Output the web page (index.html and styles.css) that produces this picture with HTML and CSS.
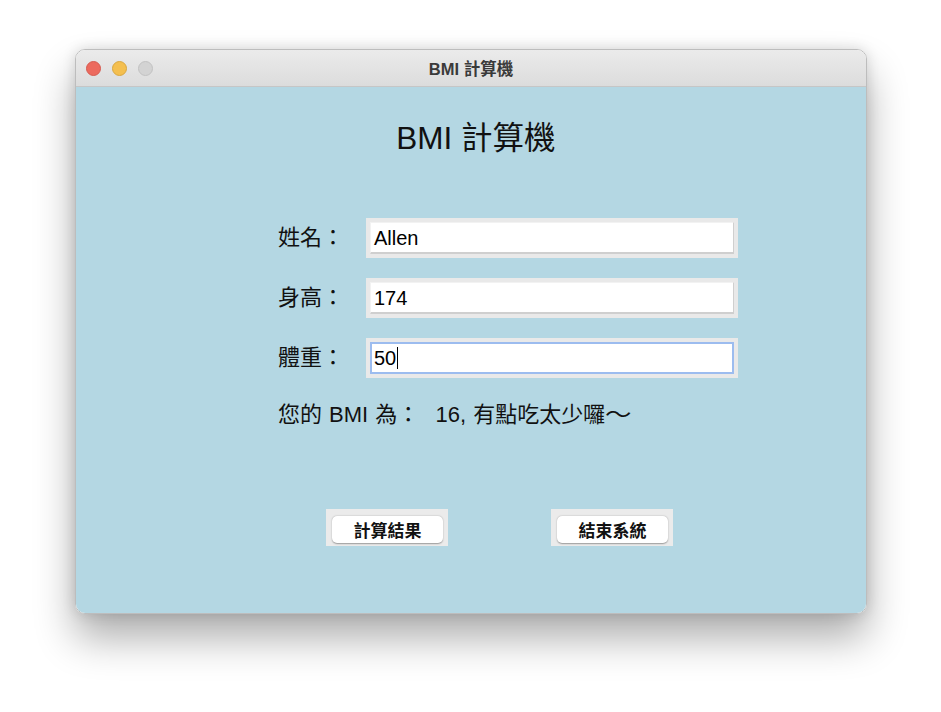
FILE: index.html
```html
<!DOCTYPE html>
<html lang="zh-Hant">
<head>
<meta charset="utf-8">
<title>BMI 計算機</title>
<link rel="stylesheet" href="styles.css">
</head>
<body>
<div class="window">
  <div class="titlebar">
    <div class="lights">
      <span class="light red"></span>
      <span class="light yellow"></span>
      <span class="light gray"></span>
    </div>
    <div class="title">BMI 計算機</div>
  </div>
  <div class="content">
    <h1 class="heading">BMI 計算機</h1>
    <div class="form">
      <div class="label">姓名：</div>
      <div class="entry"><div class="field">Allen</div></div>
      <div class="label">身高：</div>
      <div class="entry"><div class="field">174</div></div>
      <div class="label">體重：</div>
      <div class="entry"><div class="field focused">50<span class="caret"></span></div></div>
    </div>
    <div class="result">您的 BMI 為<span class="colon">：</span> 16, 有點吃太少囉<span class="tilde">～</span></div>
    <div class="buttons">
      <div class="btn-wrap"><div class="btn">計算結果</div></div>
      <div class="btn-wrap"><div class="btn">結束系統</div></div>
    </div>
  </div>
</div>
</body>
</html>
```
FILE: styles.css
```css
html, body {
  margin: 0;
  padding: 0;
  background: #ffffff;
}
body {
  min-height: 712px;
  box-sizing: border-box;
  padding: 49px 0 0 75px;
  font-family: "Liberation Sans", "Noto Sans CJK TC", sans-serif;
  color: #111;
}
.window {
  width: 792px;
  height: 565px;
  border-radius: 10px;
  overflow: hidden;
  box-sizing: border-box;
  border: 1px solid #bdbdbd;
  box-shadow: 0 24px 40px rgba(0,0,0,0.32), 0 0 14px rgba(0,0,0,0.14);
  display: flex;
  flex-direction: column;
}
.titlebar {
  height: 36px;
  flex: none;
  background: linear-gradient(#ebebeb, #dcdcdc);
  border-bottom: 1px solid #c6c6c6;
  display: flex;
  align-items: center;
  position: relative;
}
.lights {
  display: flex;
  gap: 11px;
  padding-left: 10px;
}
.light {
  width: 15px;
  height: 15px;
  border-radius: 50%;
  box-sizing: border-box;
}
.red { background: #ec6a5e; border: 1px solid #d65b50; }
.yellow { background: #f4bf4f; border: 1px solid #d9a73f; }
.gray { background: #d3d3d3; border: 1px solid #c2c2c2; }
.title {
  position: absolute;
  left: 0;
  right: 0;
  top: 0;
  bottom: 0;
  display: flex;
  align-items: center;
  justify-content: center;
  font-weight: bold;
  font-size: 16.5px;
  color: #3a3a3a;
  pointer-events: none;
}
.content {
  flex: 1;
  background: #b4d7e3;
  display: flex;
  flex-direction: column;
  align-items: flex-start;
}
.heading {
  align-self: center;
  margin: 32px 0 0 10px;
  font-size: 31.5px;
  font-weight: normal;
  line-height: 38px;
  color: #111;
}
.form {
  margin-top: 61px;
  margin-left: 202px;
  display: grid;
  grid-template-columns: 88px 372px;
  row-gap: 20px;
}
.label {
  font-size: 22px;
  height: 40px;
  line-height: 40px;
  color: #111;
}
.entry {
  height: 40px;
  box-sizing: border-box;
  padding: 4px;
  background: #e9e9e9;
}
.field {
  height: 100%;
  box-sizing: border-box;
  background: #fff;
  border-right: 1px solid #cfcfcf;
  border-bottom: 2px solid #cfcfcf;
  border-top: 1px solid #f2f2f2;
  border-left: 1px solid #f2f2f2;
  font-size: 20px;
  line-height: 30px;
  padding-left: 3px;
  color: #000;
  display: flex;
  align-items: center;
}
.field.focused {
  border: 2px solid #9cbcef;
  padding-left: 2px;
}
.caret {
  display: inline-block;
  width: 1px;
  height: 22px;
  background: #000;
  margin-left: 1px;
}
.result {
  margin-left: 202px;
  margin-top: 17px;
  font-size: 22px;
  line-height: 40px;
  color: #111;
  word-spacing: 1px;
}
.colon {
  margin-right: 9px;
}
.tilde {
  display: inline-block;
  transform: scaleX(1.2);
  transform-origin: left center;
}
.buttons {
  margin-top: 74px;
  margin-left: 250px;
  display: flex;
  gap: 103px;
}
.btn-wrap {
  width: 122px;
  height: 37px;
  box-sizing: border-box;
  background: #ebebeb;
  padding: 7px 5px 3px 6px;
}
.btn {
  height: 100%;
  background: #fff;
  border-radius: 5px;
  box-shadow: 0 0.5px 1.5px rgba(0,0,0,0.35);
  display: flex;
  align-items: center;
  justify-content: center;
  font-weight: bold;
  font-size: 17px;
  color: #111;
}
```
